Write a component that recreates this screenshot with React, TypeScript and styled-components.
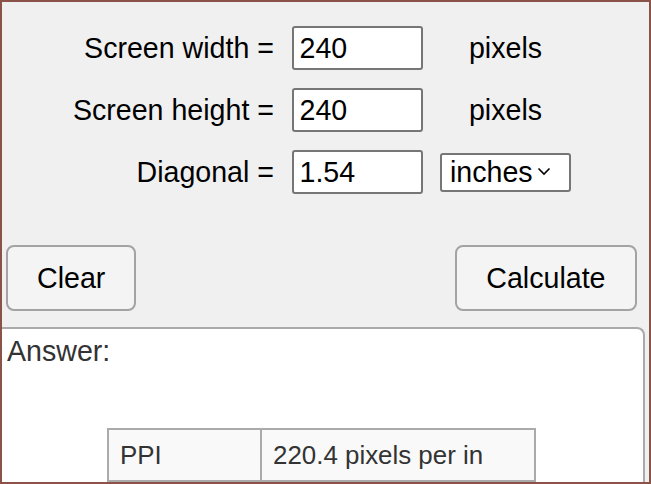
import React from "react";
import styled, { createGlobalStyle } from "styled-components";

const Global = createGlobalStyle`
  html, body { margin: 0; padding: 0; }
  body { font-family: "Liberation Sans", Arial, sans-serif; background: #f0f0f0; }
  * { box-sizing: border-box; }
`;

const Frame = styled.div`
  width: 651px;
  height: 484px;
  border: 2px solid #8b5249;
  background: #f0f0f0;
  overflow: hidden;
  font-family: "Liberation Sans", Arial, sans-serif;
  font-size: 28.6px;
  color: #000;
`;

const Form = styled.div`
  display: grid;
  grid-template-columns: 272px 131px 131px;
  grid-auto-rows: 44px;
  column-gap: 17.5px;
  row-gap: 18px;
  padding-top: 24px;
  align-items: center;
`;

const Label = styled.label`
  text-align: right;
  white-space: nowrap;
`;

const Unit = styled.span`
  text-align: center;
`;

const TextInput = styled.input`
  width: 131px;
  height: 44px;
  border: 2px solid #767676;
  border-radius: 3px;
  background: #fff;
  font: inherit;
  color: #000;
  padding: 0 6px;
  outline: none;
`;

const SelectWrap = styled.div`
  position: relative;
  width: 131px;
  height: 39px;
`;

const Select = styled.select`
  appearance: none;
  width: 100%;
  height: 100%;
  border: 2px solid #767676;
  border-radius: 3px;
  background: #fff;
  font: inherit;
  color: #000;
  padding: 0 0 0 8px;
  outline: none;
`;

const Chevron = styled.svg`
  position: absolute;
  right: 20px;
  top: 14px;
  pointer-events: none;
`;

const ButtonRow = styled.div`
  display: flex;
  justify-content: space-between;
  padding: 0 12.5px 0 4px;
  margin-top: 51px;
`;

const Button = styled.button`
  font: inherit;
  color: #000;
  background: #f4f4f4;
  border: 2px solid #a3a3a3;
  border-radius: 8px;
  height: 66px;
  padding: 0 29px;
`;

const AnswerBox = styled.div`
  margin: 16px 4px 0 0;
  background: #fff;
  border: 2px solid #aaa;
  border-left: none;
  border-bottom: none;
  border-top-right-radius: 8px;
  height: 200px;
  padding: 6px 5px;
  color: #333;
`;

const AnswerTitle = styled.div`
  line-height: 33px;
`;

const ResultTable = styled.table`
  margin: 60px 0 0 100px;
  border-collapse: collapse;
  font-size: 25.9px;
  color: #333;
`;

const Cell = styled.td<{ $w: number }>`
  width: ${(p) => p.$w}px;
  border: 2px solid #aaa;
  background: #f9f9f9;
  padding: 10px 10px 10px 11px;
  line-height: 30px;
  vertical-align: top;
`;

export default function App() {
  return (
    <>
      <Global />
      <Frame>
        <Form>
          <Label>Screen width =</Label>
          <TextInput defaultValue="240" />
          <Unit>pixels</Unit>
          <Label>Screen height =</Label>
          <TextInput defaultValue="240" />
          <Unit>pixels</Unit>
          <Label>Diagonal =</Label>
          <TextInput defaultValue="1.54" />
          <SelectWrap>
            <Select defaultValue="inches">
              <option value="inches">inches</option>
              <option value="cm">cm</option>
            </Select>
            <Chevron width="14" height="9" viewBox="0 0 14 9">
              <path d="M1.5 1.5 L7 7 L12.5 1.5" fill="none" stroke="#000" strokeWidth="1.6" />
            </Chevron>
          </SelectWrap>
        </Form>
        <ButtonRow>
          <Button>Clear</Button>
          <Button>Calculate</Button>
        </ButtonRow>
        <AnswerBox>
          <AnswerTitle>Answer:</AnswerTitle>
          <ResultTable>
            <tbody>
              <tr>
                <Cell $w={153}>PPI</Cell>
                <Cell $w={274}>220.4 pixels per in</Cell>
              </tr>
            </tbody>
          </ResultTable>
        </AnswerBox>
      </Frame>
    </>
  );
}
